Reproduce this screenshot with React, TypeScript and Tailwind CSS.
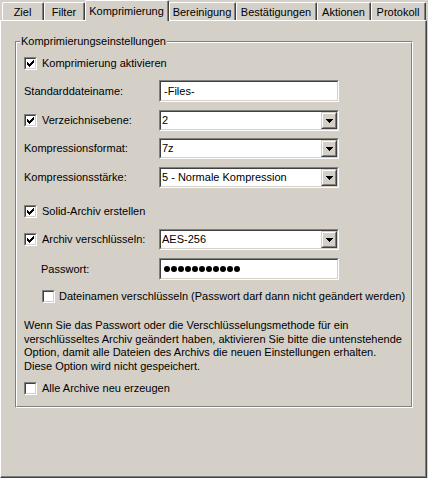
import type { ReactNode } from "react";

const FONT = { fontFamily: '"Liberation Sans", Arial, sans-serif' };

const TABS = [
  { label: "Ziel", w: "w-[42px]" },
  { label: "Filter", w: "w-[41px]" },
  { label: "Komprimierung", w: "w-[84px]", active: true },
  { label: "Bereinigung", w: "w-[67px]" },
  { label: "Bestätigungen", w: "w-[81px]" },
  { label: "Aktionen", w: "w-[54px]" },
  { label: "Protokoll", w: "w-[55px]" },
];

function Tick() {
  // classic 7x7 check mark
  const cols = [2, 3, 4, 3, 2, 1, 0];
  return (
    <svg width="7" height="7" viewBox="0 0 7 7" shapeRendering="crispEdges">
      {cols.map((y, x) => (
        <rect key={x} x={x} y={y} width="1" height="3" fill="#000" />
      ))}
    </svg>
  );
}

function Check({ checked }: { checked?: boolean }) {
  return (
    <span className="flex h-[13px] w-[13px] shrink-0 border border-t-[#808080] border-l-[#808080] border-r-white border-b-white">
      <span className="flex flex-1 items-center justify-center border border-t-[#404040] border-l-[#404040] border-r-[#d4d0c8] border-b-[#d4d0c8] bg-white">
        {checked && <Tick />}
      </span>
    </span>
  );
}

function Sunken({ h, children }: { h: string; children: ReactNode }) {
  return (
    <div className={`flex w-[180px] ${h} border border-t-[#808080] border-l-[#808080] border-r-white border-b-white`}>
      <div className="flex flex-1 items-center border border-t-[#404040] border-l-[#404040] border-r-[#d4d0c8] border-b-[#d4d0c8] bg-white">
        {children}
      </div>
    </div>
  );
}

function Select({ value }: { value: string }) {
  return (
    <Sunken h="h-[21px]">
      <span className="flex-1 pl-[1px] text-[11px] leading-none">{value}</span>
      <span className="flex h-full w-[16px] border border-t-[#d4d0c8] border-l-[#d4d0c8] border-r-[#404040] border-b-[#404040]">
        <span className="flex flex-1 items-center justify-center border border-t-white border-l-white border-r-[#808080] border-b-[#808080] bg-[#d4d0c8]">
          <svg width="7" height="4" viewBox="0 0 7 4" shapeRendering="crispEdges">
            <rect x="0" y="0" width="7" height="1" fill="#000" />
            <rect x="1" y="1" width="5" height="1" fill="#000" />
            <rect x="2" y="2" width="3" height="1" fill="#000" />
            <rect x="3" y="3" width="1" height="1" fill="#000" />
          </svg>
        </span>
      </span>
    </Sunken>
  );
}

export default function App() {
  return (
    <div className="h-[478px] w-[428px] bg-[#d4d0c8] text-[11px] text-black" style={FONT}>
      {/* tab strip */}
      <div className="flex h-[20px] items-end pl-[2px]">
        {TABS.map((t) =>
          t.active ? (
            <div
              key={t.label}
              className={`relative z-10 -mb-[1px] flex h-[21px] ${t.w} rounded-t-[2px] border-t border-l border-r border-t-white border-l-white border-r-[#404040] bg-[#d4d0c8]`}
            >
              <div className="flex flex-1 justify-center border-r border-r-[#808080] pt-[2px]">{t.label}</div>
            </div>
          ) : (
            <div
              key={t.label}
              className={`flex h-[18px] ${t.w} rounded-t-[2px] border-t border-l border-r border-t-white border-l-white border-r-[#404040]`}
            >
              <div className="flex flex-1 items-center justify-center border-r border-r-[#808080] pt-[1px]">{t.label}</div>
            </div>
          )
        )}
      </div>

      {/* page */}
      <div className="h-[458px] w-[427px] border border-t-white border-l-white border-r-[#404040] border-b-[#404040]">
        <div className="h-full border-r border-b border-r-[#808080] border-b-[#808080] pt-[20px] pl-[14px]">
          <div className="relative h-[367px] w-[398px] border border-t-[#808080] border-l-[#808080] border-r-white border-b-white">
            <span className="absolute -top-[8px] left-[4px] bg-[#d4d0c8] px-[1px] leading-[14px]">
              Komprimierungseinstellungen
            </span>
            <div className="flex h-full flex-col border border-t-white border-l-white border-r-[#808080] border-b-[#808080] pt-[12px] pl-[7px]">
              <label className="flex h-[17px] items-center gap-[5px]">
                <Check checked />
                <span>Komprimierung aktivieren</span>
              </label>

              <div className="mt-[8px] flex items-center">
                <span className="w-[135px]">Standarddateiname:</span>
                <Sunken h="h-[22px]">
                  <span className="pl-[3px] leading-none">-Files-</span>
                </Sunken>
              </div>

              <div className="mt-[8px] flex items-center">
                <label className="flex w-[135px] items-center gap-[5px]">
                  <Check checked />
                  <span>Verzeichnisebene:</span>
                </label>
                <Select value="2" />
              </div>

              <div className="mt-[7px] flex items-center">
                <span className="w-[135px]">Kompressionsformat:</span>
                <Select value="7z" />
              </div>

              <div className="mt-[8px] flex items-center">
                <span className="w-[135px]">Kompressionsstärke:</span>
                <Select value="5 - Normale Kompression" />
              </div>

              <label className="mt-[15px] flex h-[17px] items-center gap-[5px]">
                <Check checked />
                <span>Solid-Archiv erstellen</span>
              </label>

              <div className="mt-[9px] flex items-center">
                <label className="flex w-[135px] items-center gap-[5px]">
                  <Check checked />
                  <span>Archiv verschlüsseln:</span>
                </label>
                <Select value="AES-256" />
              </div>

              <div className="mt-[8px] flex items-center">
                <span className="w-[135px] pl-[17px]">Passwort:</span>
                <Sunken h="h-[22px]">
                  {/* masked password, 11 chars */}
                  <span className="flex gap-[1px] pl-[3px]" aria-label="Passwort">
                    {Array.from({ length: 11 }).map((_, i) => (
                      <span key={i} className="h-[6px] w-[6px] rounded-full bg-black" />
                    ))}
                  </span>
                </Sunken>
              </div>

              <label className="mt-[8px] flex h-[17px] items-center gap-[4px] pl-[18px]">
                <Check />
                <span>Dateinamen verschlüsseln (Passwort darf dann nicht geändert werden)</span>
              </label>

              <p className="mt-[14px] leading-[13.5px]">
                Wenn Sie das Passwort oder die Verschlüsselungsmethode für ein
                <br />
                verschlüsseltes Archiv geändert haben, aktivieren Sie bitte die untenstehende
                <br />
                Option, damit alle Dateien des Archivs die neuen Einstellungen erhalten.
                <br />
                Diese Option wird nicht gespeichert.
              </p>

              <label className="mt-[7px] flex h-[17px] items-center gap-[5px]">
                <Check />
                <span>Alle Archive neu erzeugen</span>
              </label>
            </div>
          </div>
        </div>
      </div>
    </div>
  );
}
